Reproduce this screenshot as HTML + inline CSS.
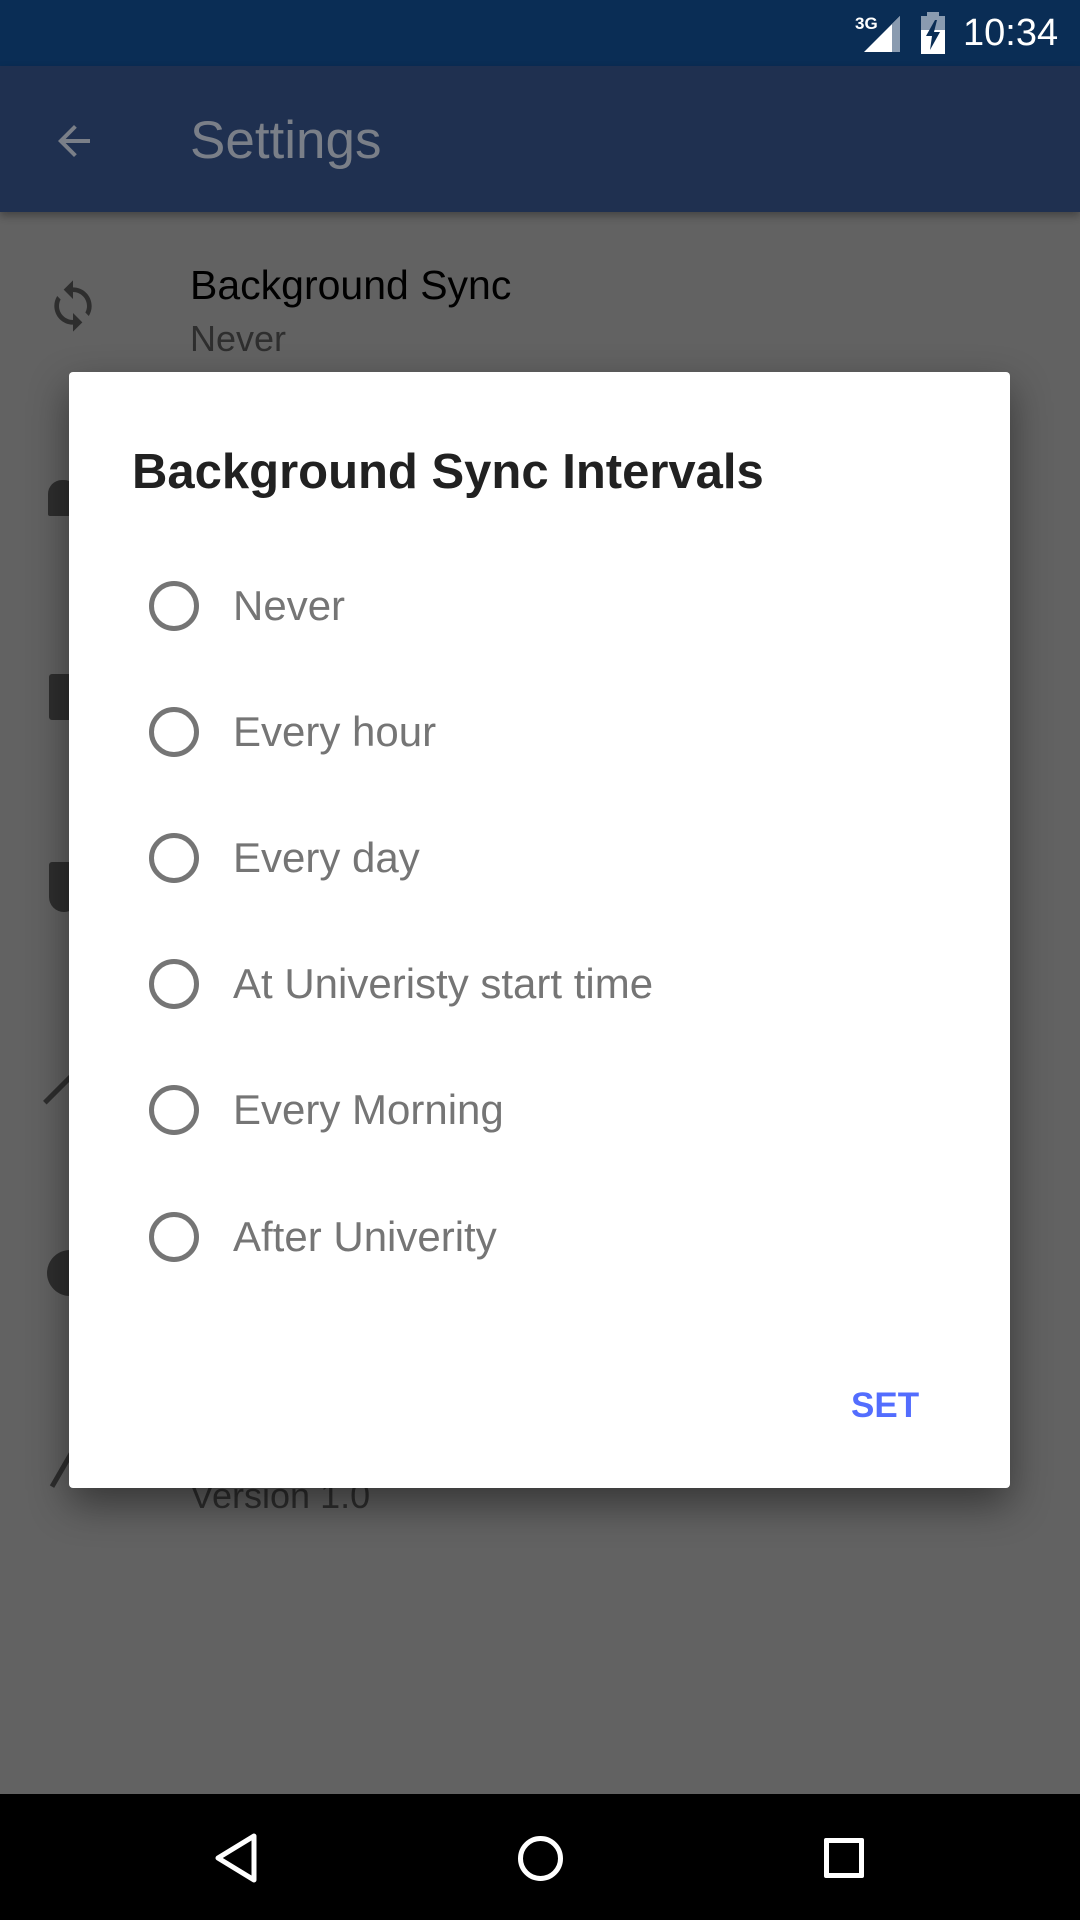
<!DOCTYPE html>
<html><head><meta charset="utf-8"><style>
*{margin:0;padding:0;box-sizing:border-box}
body{width:1080px;height:1920px;overflow:hidden;background:#626262;font-family:"Liberation Sans",Roboto,sans-serif;position:relative}
.abs{position:absolute}
.status{left:0;top:0;width:1080px;height:66px;background:#0a2d55}
.tool{left:0;top:66px;width:1080px;height:146px;background:#1f3050;box-shadow:0 4px 8px rgba(0,0,0,.3)}
.dlg{left:69px;top:372px;width:941px;height:1116px;background:#fff;border-radius:4px;box-shadow:0 16px 40px rgba(0,0,0,.45)}
.radio{position:absolute;left:80px;width:50px;height:50px;border:5px solid #757575;border-radius:50%}
.lbl{position:absolute;left:164px;font-size:42px;color:#757575;line-height:50px}
.nav{left:0;top:1794px;width:1080px;height:126px;background:#000}
</style></head><body>
<div class="abs status"></div>
<div class="abs" style="left:855px;top:14px;color:#fff;font-size:17px;font-weight:bold">3G</div>
<svg class="abs" style="left:862px;top:14px" width="40" height="40"><polygon points="2,38 38,38 38,2" fill="#fff"/><polygon points="30,10 38,2 38,38 30,38" fill="#8a9bb0"/></svg>
<svg class="abs" style="left:920px;top:12px" width="26" height="42"><rect x="7" y="0" width="12" height="5" fill="#8a9bb0"/><rect x="1" y="4" width="24" height="38" fill="#fff"/><rect x="1" y="4" width="24" height="14" fill="#8a9bb0"/><polygon points="15,8 6,24 12,24 10,38 20,20 14,20 17,8" fill="#0a2d55"/></svg>
<div class="abs" style="left:963px;top:12px;color:#fff;font-size:38px">10:34</div>
<div class="abs tool"></div>
<svg class="abs" style="left:50px;top:117px" width="48" height="48" viewBox="0 0 24 24"><path d="M20 11H7.8l5.6-5.6L12 4l-8 8 8 8 1.4-1.4L7.8 13H20z" fill="#7a7f88"/></svg>
<div class="abs" style="left:190px;top:110px;font-size:53px;color:#7a7f88">Settings</div>
<svg class="abs" style="left:45px;top:278px" width="56" height="56" viewBox="0 0 24 24"><path d="M12 4V1L8 5l4 4V6c3.3 0 6 2.7 6 6 0 1-.25 1.97-.7 2.8l1.46 1.46C19.540 15.03 20 13.57 20 12c0-4.420-3.58-8-8-8zm0 14c-3.31 0-6-2.69-6-6 0-1.01.25-1.970.7-2.8L5.24 7.74C4.46 8.97 4 10.43 4 12c0 4.42 3.58 8 8 8v3l4-4-4-4v3z" fill="#2e2e2e"/></svg>
<div class="abs" style="left:190px;top:262px;font-size:41px;color:#000">Background Sync</div>
<div class="abs" style="left:190px;top:318px;font-size:36px;color:#2e2e2e">Never</div>
<div class="abs" style="left:48px;top:480px;width:30px;height:36px;background:#2e2e2e;border-radius:14px 14px 2px 2px"></div>
<div class="abs" style="left:49px;top:674px;width:30px;height:46px;background:#2e2e2e;border-radius:3px"></div>
<div class="abs" style="left:49px;top:862px;width:30px;height:50px;background:#2e2e2e;border-radius:4px 4px 20px 20px"></div>
<div class="abs" style="left:60px;top:1060px;width:5px;height:50px;background:#2e2e2e;transform:rotate(45deg)"></div>
<div class="abs" style="left:47px;top:1250px;width:46px;height:46px;background:#2e2e2e;border-radius:50%"></div>
<div class="abs" style="left:62px;top:1440px;width:5px;height:50px;background:#2e2e2e;transform:rotate(30deg)"></div>
<div class="abs" style="left:190px;top:1475px;font-size:36px;color:#2e2e2e">Version 1.0</div>
<div class="abs dlg">
<div style="position:absolute;left:63px;top:72px;font-size:49px;color:#212121;font-weight:bold">Background Sync Intervals</div>
<div class="radio" style="top:209px"></div><div class="lbl" style="top:209px">Never</div>
<div class="radio" style="top:335px"></div><div class="lbl" style="top:335px">Every hour</div>
<div class="radio" style="top:461px"></div><div class="lbl" style="top:461px">Every day</div>
<div class="radio" style="top:587px"></div><div class="lbl" style="top:587px">At Univeristy start time</div>
<div class="radio" style="top:713px"></div><div class="lbl" style="top:713px">Every Morning</div>
<div class="radio" style="top:840px"></div><div class="lbl" style="top:840px">After Univerity</div>
<div style="position:absolute;left:782px;top:1014px;font-size:35px;color:#536dfe;font-weight:bold">SET</div>
</div>
<div class="abs nav"></div>
<svg class="abs" style="left:210px;top:1830px" width="52" height="56"><polygon points="44,6 44,50 8,28" fill="none" stroke="#fff" stroke-width="5" stroke-linejoin="round"/></svg>
<div class="abs" style="left:518px;top:1836px;width:45px;height:45px;border:5px solid #fff;border-radius:50%"></div>
<div class="abs" style="left:824px;top:1838px;width:40px;height:40px;border:5px solid #fff;border-radius:2px"></div>
</body></html>
